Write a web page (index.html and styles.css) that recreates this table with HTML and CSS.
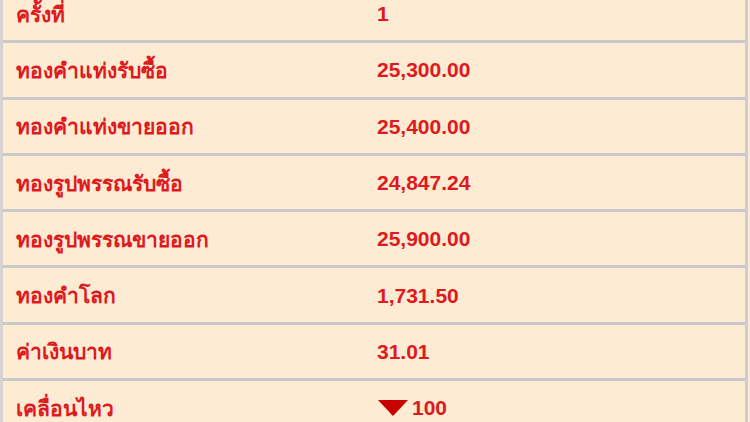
FILE: index.html
```html
<!DOCTYPE html>
<html lang="th">
<head>
<meta charset="utf-8">
<link rel="stylesheet" href="styles.css">
</head>
<body>
<div class="table">
  <div class="row"><div class="label">ครั้งที่</div><div class="value">1</div></div>
  <div class="row"><div class="label">ทองคำแท่งรับซื้อ</div><div class="value">25,300.00</div></div>
  <div class="row"><div class="label">ทองคำแท่งขายออก</div><div class="value">25,400.00</div></div>
  <div class="row"><div class="label">ทองรูปพรรณรับซื้อ</div><div class="value">24,847.24</div></div>
  <div class="row"><div class="label">ทองรูปพรรณขายออก</div><div class="value">25,900.00</div></div>
  <div class="row"><div class="label">ทองคำโลก</div><div class="value">1,731.50</div></div>
  <div class="row"><div class="label">ค่าเงินบาท</div><div class="value">31.01</div></div>
  <div class="row"><div class="label">เคลื่อนไหว</div><div class="value"><span class="down"></span>100</div></div>
</div>
</body>
</html>
```
FILE: styles.css
```css
html, body {
  margin: 0;
  padding: 0;
  background: #fdebd3;
  overflow: hidden;
}
body {
  font-family: "Liberation Sans", Arial, sans-serif;
  font-weight: bold;
  font-size: 21px;
  color: #dd1a1e;
}
.table {
  margin-top: -13px;
  width: 742px;
  border-left: 3px solid #d3d3d3;
  border-right: 3px solid #cdcdcd;
  box-sizing: content-box;
}
.row {
  display: grid;
  grid-template-columns: 374px 1fr;
  height: 53.3px;
  align-items: center;
  border-bottom: 3px solid #c9c9c9;
}
.label {
  padding-left: 13px;
  padding-top: 1px;
}
.value {
  display: flex;
  align-items: center;
  padding-top: 1px;
}
.down {
  width: 0;
  height: 0;
  border-left: 15px solid transparent;
  border-right: 15px solid transparent;
  border-top: 16px solid #c70000;
  margin: 0 4px 0 1px;
}
```
